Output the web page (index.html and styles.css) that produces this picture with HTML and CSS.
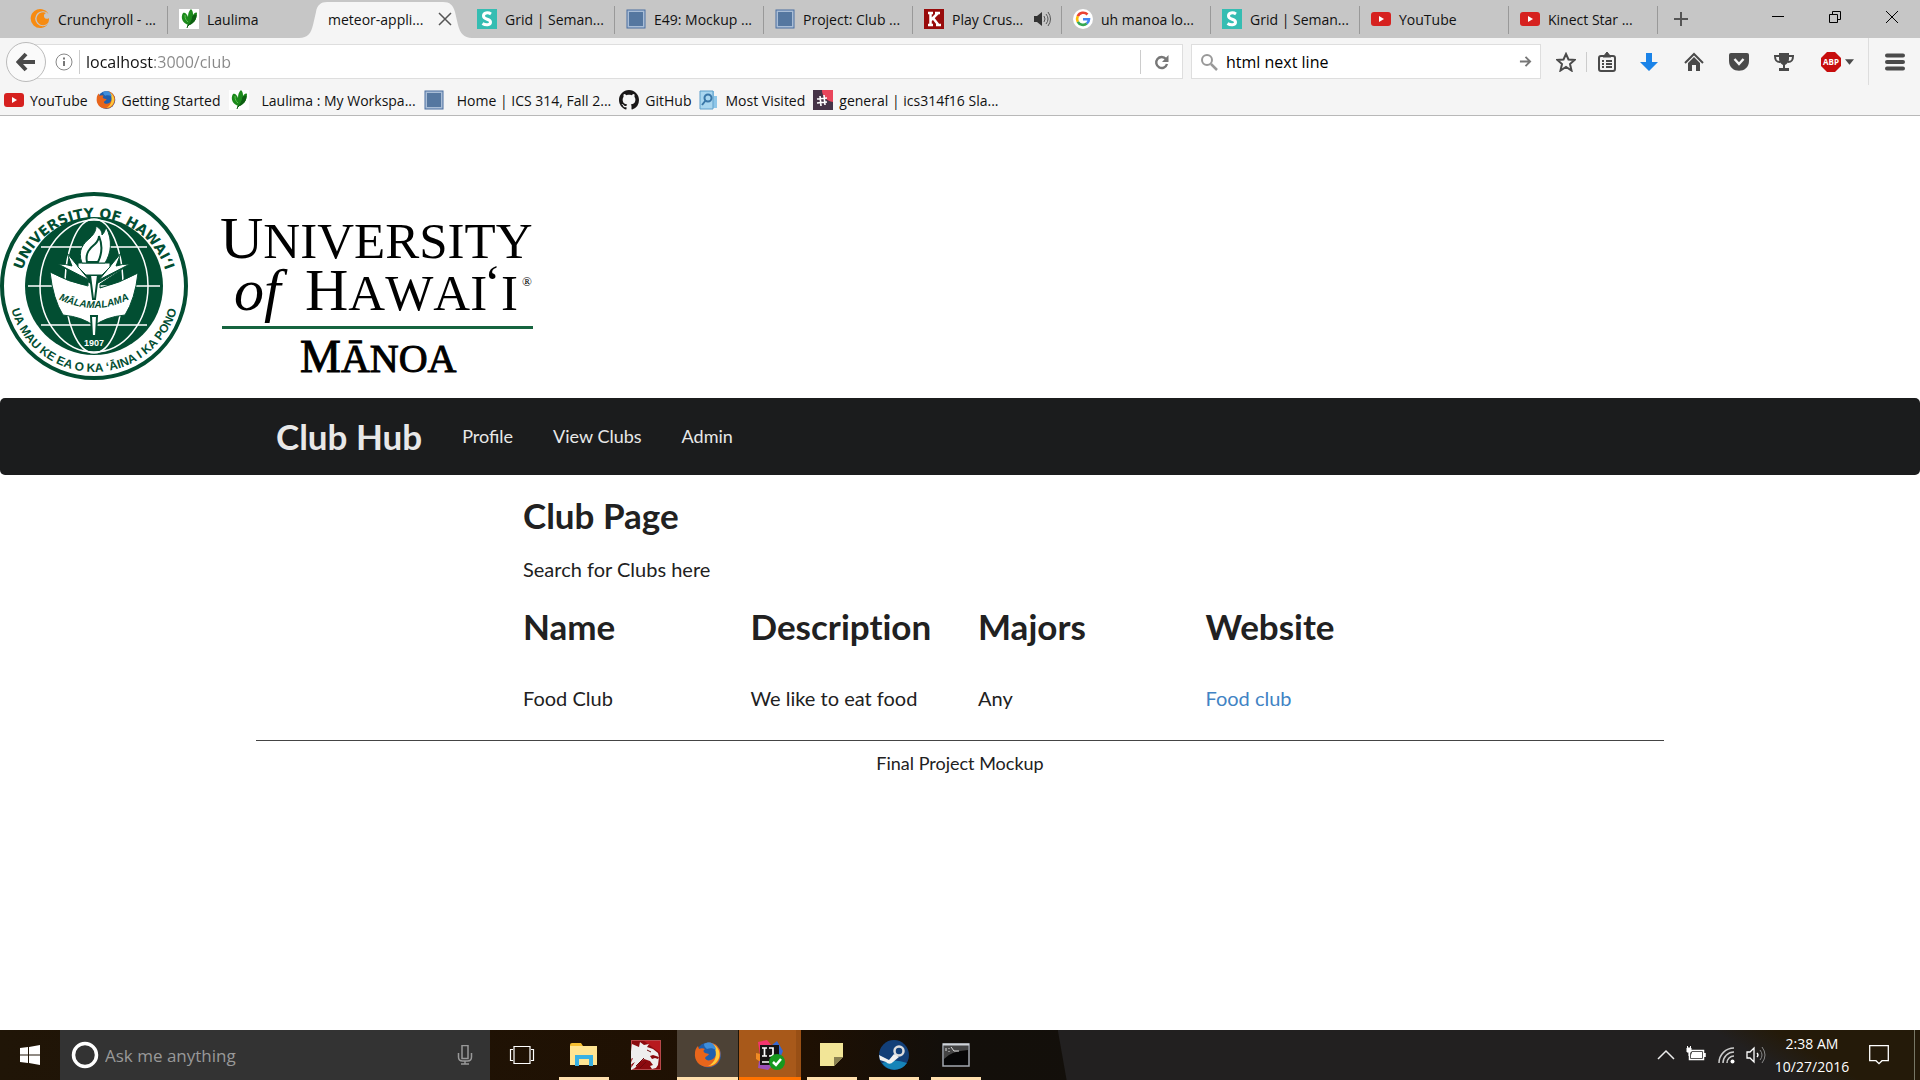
FILE: index.html
```html
<!DOCTYPE html>
<html lang="en">
<head>
<meta charset="utf-8">
<title>meteor-application-template</title>
<link rel="stylesheet" href="styles.css">
</head>
<body>
<svg class="defs" aria-hidden="true">
  <symbol id="i-yt" viewBox="0 0 20 20"><rect y="3" width="20" height="14" rx="3" fill="#d6211f"/><path d="M8 7v6l5-3z" fill="#fff"/></symbol>
  <symbol id="i-leaf" viewBox="0 0 20 20"><rect width="20" height="20" fill="#fff"/><path d="M9 16C4 14 1 9 4 4c2-1 4 1 5 4 0-4 1-6 3-8 2 2 2 4 2 6 1-2 3-3 4-2 0 6-3 11-9 12z" fill="#1c8a1c"/><path d="M9 17c2-2 4-5 5-10 2-1 3-1 3-1 0 5-3 9-8 10l-1 3" fill="#0d5f12" stroke="#0d5f12"/><path d="M6 6c0 4 1 5 3 7" fill="none" stroke="#5cc04c"/></symbol>
  <symbol id="i-s" viewBox="0 0 20 20"><rect width="20" height="20" fill="#35bdb2"/><path d="M14 5C11 3 6.500 3.500 6.500 7c0 4 7 2.500 7 6 0 3.500-5 3.500-8 1.500" fill="none" stroke="#fff" stroke-width="3"/></symbol>
  <symbol id="i-box" viewBox="0 0 20 20"><rect x="1" y="1" width="18" height="18" fill="#a9bdd6" stroke="#4a6fa0"/><rect x="3" y="3" width="14" height="14" fill="#5577a0"/></symbol>
  <symbol id="i-fox" viewBox="0 0 28 28"><circle cx="14.500" cy="14" r="12.500" fill="#1f5fae"/><path d="M11 3c4-3 12-1 15 6 2 9-3 17-12 17C5 26 0 19 1 12c0-3 1-5 3-7l1 3c2-1 4-1 6 0-2 1-2 3 0 4l4 1c-1 2-3 2-4 4 1 3 5 3 8 1 5-4 4-10 0-14-2-1-5-1-8-1z" fill="#e8651b"/><path d="M19 3c5 3 8 8 6 14-2 5-6 8-11 8 7-3 11-11 5-22z" fill="#ffca3a"/><path d="M10 3c3-2 7-2 9 0 2 2 3 4 3 6-3-2-6-2-9-1-1-1-3-2-3-5z" fill="#3f8edb"/></symbol>
  <symbol id="i-arrow" viewBox="0 0 14 14"><path d="M1 7h11M7 2l5 5-5 5" fill="none" stroke="#777" stroke-width="2"/></symbol>
</svg>

<header class="browser">
  <div class="tabstrip">
    <div class="tabs" role="tablist">
      <button class="tab" role="tab"><svg class="fav" viewBox="0 0 20 20"><path d="M18 15A9.500 9.500 0 1 1 18.500 5 7.500 7.500 0 1 0 18 15z" fill="#f78b11"/><path d="M18 14a6.500 6.500 0 1 1-2-10 3 3 0 1 0 3 5c0 2 0 3-1 5z" fill="#f78b11"/></svg><span>Crunchyroll - ...</span></button>
      <button class="tab tab-plain" role="tab"><svg class="fav"><use href="#i-leaf"/></svg><span>Laulima</span></button>
      <button class="tab tab-active" role="tab" aria-selected="true"><svg class="tab-shape" viewBox="0 0 173 38" preserveAspectRatio="none"><path d="M0 38c9 0 12-5 14-13l3-13C18 5 22 2 28 2h116c7 0 10 3 12 10l3 13c2 8 6 13 14 13z" fill="#f5f5f5"/></svg><span>meteor-appli...</span><svg class="tab-x" viewBox="0 0 14 14"><path d="M1 1l12 12M13 1L1 13" fill="none" stroke="#555" stroke-width="1.500"/></svg></button>
      <button class="tab" role="tab"><svg class="fav"><use href="#i-s"/></svg><span>Grid | Seman...</span></button>
      <button class="tab" role="tab"><svg class="fav"><use href="#i-box"/></svg><span>E49: Mockup ...</span></button>
      <button class="tab" role="tab"><svg class="fav"><use href="#i-box"/></svg><span>Project: Club ...</span></button>
      <button class="tab" role="tab"><svg class="fav" viewBox="0 0 20 20"><rect width="20" height="20" fill="#980b0b"/><path d="M4 4h5M4 16h5M11 4h5M12 16h5M6.500 4v12M14 4l-7 7M9 9l5.500 7" stroke="#fff" stroke-width="2.500" fill="none"/></svg><span>Play Crus...</span><svg class="sound" viewBox="0 0 18 16"><path d="M1 5h3l5-4v14l-5-4H1z" fill="#333"/><path d="M11 5q2 3 0 6M13 3q4 5 0 10M15 1q5 7 0 14" fill="none" stroke="#555"/></svg></button>
      <button class="tab" role="tab"><svg class="fav" viewBox="0 0 20 20"><circle cx="10" cy="10" r="10" fill="#fff"/><g fill="none" stroke-width="2.600"><path d="M14.500 5.500A6 6 0 0 0 4.800 7.200" stroke="#ea4335"/><path d="M4.800 7.200a6 6 0 0 0 0 5.600" stroke="#fbbc05"/><path d="M4.800 12.800a6 6 0 0 0 9 1.800" stroke="#34a853"/><path d="M13.800 14.600A6 6 0 0 0 16 10.200h-6" stroke="#4285f4"/></g></svg><span>uh manoa lo...</span></button>
      <button class="tab" role="tab"><svg class="fav"><use href="#i-s"/></svg><span>Grid | Seman...</span></button>
      <button class="tab" role="tab"><svg class="fav"><use href="#i-yt"/></svg><span>YouTube</span></button>
      <button class="tab" role="tab"><svg class="fav"><use href="#i-yt"/></svg><span>Kinect Star ...</span></button>
      <button class="newtab" aria-label="New tab"><svg width="16" height="16" viewBox="0 0 16 16"><path d="M8 1v14M1 8h14" stroke="#555" stroke-width="2"/></svg></button>
    </div>
    <div class="wincontrols">
      <button aria-label="Minimize"><svg viewBox="0 0 14 14"><path d="M1 6.500h12" stroke="#000"/></svg></button>
      <button aria-label="Restore"><svg viewBox="0 0 14 14"><path d="M1.500 4.500h8v8h-8zM4.500 4V1.500h8v8H10" fill="none" stroke="#000"/></svg></button>
      <button aria-label="Close"><svg viewBox="0 0 14 14"><path d="M1 1l12 12M13 1L1 13" fill="none" stroke="#000"/></svg></button>
    </div>
  </div>

  <div class="navrow">
    <button class="back" aria-label="Back"><svg width="20" height="20" viewBox="0 0 20 20"><path d="M10 2l-7.500 8 7.500 8M3 10h16" fill="none" stroke="#4a4a4a" stroke-width="4"/></svg></button>
    <div class="urlbar">
      <svg class="info" viewBox="0 0 18 18"><circle cx="9" cy="9" r="8" fill="none" stroke="#888"/><path d="M9 8v5M9 4.500v2" stroke="#777" stroke-width="2"/></svg>
      <input class="url" aria-label="Address" value="localhost:3000/club">
      <button class="reload" aria-label="Reload"><svg width="16" height="16" viewBox="0 0 16 16"><path d="M12 5a5.500 5.500 0 1 0 1 5" fill="none" stroke="#777" stroke-width="2.400"/><path d="M14.500 1v7H8z" fill="#777"/></svg></button>
    </div>
    <div class="searchbar">
      <svg width="18" height="18" viewBox="0 0 18 18"><circle cx="7" cy="7" r="5" fill="none" stroke="#999" stroke-width="2"/><path d="M11 11l6 6" stroke="#999" stroke-width="2.500"/></svg>
      <input aria-label="Search" value="html next line">
      <button aria-label="Go"><svg width="13" height="13"><use href="#i-arrow"/></svg></button>
    </div>
    <div class="tools">
      <button class="t-star" aria-label="Bookmark"><svg viewBox="0 0 20 20"><path d="M10 2l2.500 5.500 6 .5-4.500 4 1.500 6.500L10 15l-5.500 3.500L6 12 1.500 8l6-.5z" fill="none" stroke="#4a4a4a" stroke-width="2"/></svg></button>
      <button class="t-list" aria-label="Bookmarks list"><svg viewBox="0 0 20 20"><rect x="2" y="4" width="16" height="15" rx="2" fill="none" stroke="#4a4a4a" stroke-width="2"/><path d="M6 5l4-5 4 5z" fill="#4a4a4a" stroke="#4a4a4a"/><path d="M5 9h2m2 0h6M5 12h2m2 0h6M5 15h2m2 0h6" stroke="#4a4a4a" stroke-width="2"/></svg></button>
      <button aria-label="Downloads"><svg viewBox="0 0 20 20"><path d="M7 1h6v9h6l-9 9-9-9h6z" fill="#1a83e8"/></svg></button>
      <button aria-label="Home"><svg viewBox="0 0 20 20"><path d="M1 11l9-9 9 9" fill="none" stroke="#4a4a4a" stroke-width="2"/><path d="M4 11l6-6 6 6v8h-4v-6H8v6H4z" fill="#4a4a4a"/></svg></button>
      <button aria-label="Pocket"><svg viewBox="0 0 20 20"><path d="M2 1h16q2 0 2 2v6c0 13-20 13-20 0V3q0-2 2-2z" fill="#4a4a4a"/><path d="M5.500 7l4.500 5 4.500-5" fill="none" stroke="#f5f5f5" stroke-width="2.400"/></svg></button>
      <button aria-label="Achievements"><svg viewBox="0 0 20 20"><path d="M5 1h10v6c0 3-2 5-4 6v3h4v3H5v-3h4v-3c-2-1-4-3-4-6z" fill="#4a4a4a"/><path d="M5 4H1c0 4 1 6 5 6M15 4h4c0 4-1 6-5 6" fill="none" stroke="#4a4a4a" stroke-width="2"/></svg></button>
      <button class="t-abp" aria-label="Adblock Plus"><svg viewBox="0 0 20 20"><path d="M6 0h8l6 6v8l-6 6H6l-6-6V6z" fill="#c70d0d"/><text x="10" y="13" class="abp-text">ABP</text></svg><svg class="caret" viewBox="0 0 10 6"><path d="M0 0h10L5 6z" fill="#4a4a4a"/></svg></button>
      <button class="t-menu" aria-label="Menu"><svg viewBox="0 0 20 20"><path d="M2 3.500h16M2 10h16M2 16.500h16" stroke="#4a4a4a" stroke-width="4" stroke-linecap="round"/></svg></button>
    </div>
  </div>

  <nav class="bookmarks" aria-label="Bookmarks">
    <a href="#"><svg class="fav"><use href="#i-yt"/></svg>YouTube</a>
    <a href="#"><svg class="fav"><use href="#i-fox"/></svg>Getting Started</a>
    <a href="#" class="wide"><svg class="fav"><use href="#i-leaf"/></svg>Laulima : My Workspa...</a>
    <a href="#" class="wide"><svg class="fav"><use href="#i-box"/></svg>Home | ICS 314, Fall 2...</a>
    <a href="#"><svg class="fav" viewBox="0 0 16 16"><path fill="#191717" d="M8 0C3.580 0 0 3.580 0 8c0 3.540 2.290 6.530 5.470 7.590.4.070.55-.17.55-.38 0-.19-.01-.82-.01-1.490-2.010.37-2.530-.49-2.690-.94-.09-.23-.48-.94-.82-1.130-.28-.15-.68-.52-.01-.53.63-.01 1.080.58 1.230.82.72 1.210 1.870.87 2.330.66.07-.52.28-.87.51-1.070-1.780-.2-3.640-.89-3.640-3.950 0-.87.31-1.590.82-2.150-.08-.2-.36-1.020.08-2.120 0 0 .67-.21 2.200.82.64-.18 1.320-.27 2-.27s1.360.09 2 .27c1.530-1.040 2.200-.82 2.200-.82.44 1.100.16 1.920.08 2.120.51.56.82 1.270.82 2.150 0 3.070-1.870 3.750-3.650 3.950.29.25.54.73.54 1.480 0 1.070-.01 1.930-.01 2.200 0 .21.15.46.55.38A8.010 8.010 0 0 0 16 8c0-4.420-3.580-8-8-8z"/></svg>GitHub</a>
    <a href="#"><svg class="fav" viewBox="0 0 20 20"><path d="M1 1h14v5h3v12H1z" fill="#8fc6e8"/><path d="M1 1h13v18H1z" fill="#a9d6ef" stroke="#5e9fca"/><circle cx="9" cy="8" r="3.500" fill="none" stroke="#3a77a8" stroke-width="2"/><path d="M7 10l-4 5" stroke="#3a77a8" stroke-width="2"/></svg>Most Visited</a>
    <a href="#"><svg class="fav" viewBox="0 0 20 20"><rect width="20" height="20" fill="#453347"/><path d="M9 0h11v12C13 11 9 6 9 0z" fill="#e9455b"/><path d="M7 6l1 10M11 5l1 10M4 9l10-1M4 13l10-1" stroke="#fff" stroke-width="1.600"/></svg>general | ics314f16 Sla...</a>
  </nav>
</header>

<main class="page">
  <svg class="logo" width="540" height="200" viewBox="0 0 540 200" role="img" aria-label="University of Hawaii at Manoa">
    <defs>
      <path id="arc-top" d="M19 101a75 75 0 0 1 150 0"/>
      <path id="arc-bottom" d="M8 94a86 86 0 0 0 172 0"/>
      <path id="arc-book" d="M58 107q36 18 72 0"/>
    </defs>
    <circle cx="94" cy="94" r="92" fill="#fff" stroke="#024e32" stroke-width="4"/>
    <circle cx="94" cy="94" r="69" fill="#024e32"/>
    <g fill="none" stroke="#fff" stroke-width="1.500">
      <path d="M28 94h132M41 55h106M41 133h106"/>
      <ellipse cx="94" cy="94" rx="54" ry="66"/>
      <ellipse cx="94" cy="94" rx="29" ry="67"/>
    </g>
    <path d="M50 80q18 10 38 14v-4L58 72l32 19h8l32-19-30 20v4q20-5 38-15-3 26-13 42-20 2-31 11-11-9-31-11-10-16-13-43z" fill="#fff" stroke="#024e32" stroke-width="1"/>
    <path d="M67 61l22 27-31-16q8 0 14 2zM121 61L99 88l31-16q-8 0-14 2z" fill="#fff" stroke="#024e32" stroke-width="1"/>
    <path d="M90 83h8l-3 24h-2zM91 124h6l-1 20h-4z" fill="#fff" stroke="#024e32" stroke-width="2"/>
    <path d="M78 71h32v4l-8 8H86l-8-8z" fill="#fff" stroke="#024e32"/>
    <path d="M82 71c-5-13 2-20 8-25 4-4 6-7 6-12 5 3 6 6 6 9 2-2 3-4 4-8 7 14 5 26-1 36z" fill="#fff" stroke="#024e32"/>
    <path d="M87 70c-2-9 3-14 8-18 3-3 4-6 4-8 4 10 3 18-1 26z" fill="none" stroke="#024e32" stroke-width="2"/>
    <text class="seal-top"><textPath href="#arc-top" startOffset="50%">UNIVERSITY OF HAWAIʻI</textPath></text>
    <text class="seal-bottom"><textPath href="#arc-bottom" startOffset="50%">UA MAU KE EA O KA ʻĀINA I KA PONO</textPath></text>
    <text class="seal-book"><textPath href="#arc-book" startOffset="50%">MĀLAMALAMA</textPath></text>
    <text class="seal-year" x="94" y="154">1907</text>
    <g class="wordmark">
      <text x="220" y="66"><tspan class="cap">U</tspan>NIVERSITY</text>
      <text x="234" y="118" class="of">of</text>
      <text x="305" y="118"><tspan class="cap">H</tspan>AWAI</text>
      <text x="484" y="108">ʻ</text>
      <text x="501" y="118">I</text>
      <text x="522" y="94" class="reg">®</text>
      <text x="300" y="180" class="manoa"><tspan class="manoa-cap">M</tspan>ĀNOA</text>
    </g>
    <path d="M222 135.500h311" stroke="#16643f" stroke-width="3"/>
  </svg>

  <nav class="menu" aria-label="Main">
    <div class="container menu-items">
      <a href="#" class="brand">Club Hub</a>
      <a href="#">Profile</a>
      <a href="#">View Clubs</a>
      <a href="#">Admin</a>
    </div>
  </nav>

  <div class="container">
    <section class="clubs">
      <h1>Club Page</h1>
      <p>Search for Clubs here</p>
      <table>
        <thead><tr><th>Name</th><th>Description</th><th>Majors</th><th>Website</th></tr></thead>
        <tbody><tr><td>Food Club</td><td>We like to eat food</td><td>Any</td><td><a href="#">Food club</a></td></tr></tbody>
      </table>
    </section>
    <footer>Final Project Mockup</footer>
  </div>
</main>

<div class="taskbar">
  <button class="start" aria-label="Start"><svg width="20" height="20" viewBox="0 0 20 20"><path d="M0 3l8-1v7.500H0zM9 2l11-2v9.500H9zM0 10.500h8V18l-8-1zM9 10.500h11V20L9 18z" fill="#fff"/></svg></button>
  <div class="cortana">
    <svg width="28" height="28" viewBox="0 0 28 28"><circle cx="14" cy="14" r="11.500" fill="none" stroke="#fff" stroke-width="3.500"/></svg>
    <input aria-label="Search Windows" placeholder="Ask me anything">
    <button aria-label="Speak"><svg width="16" height="20" viewBox="0 0 16 20"><path d="M5 .500h6v13H5zM1.500 8v4q0 4 4 4h5q4 0 4-4V8M8 16v3M4 19h8" fill="none" stroke="#999" stroke-width="1.500"/></svg></button>
  </div>
  <div class="apps">
    <button aria-label="Task view"><svg viewBox="0 0 30 30"><path d="M7 6.500h16v17H7zM6 9.500H3.500v11H6M24 9.500h2.500v11H24" fill="none" stroke="#fff" stroke-width="1.200"/></svg></button>
    <button class="open" aria-label="File Explorer"><svg viewBox="0 0 30 30"><path d="M1 5q0-2 2-2h9l2 3H1z" fill="#f5bf31"/><path d="M1 6h27v19H1z" fill="#ffe592"/><path d="M6 26V15h18v11h-4v-7h-10v7z" fill="#38b1e4"/></svg></button>
    <button aria-label="Dragon"><svg viewBox="0 0 30 30"><rect x=".5" y=".5" width="29" height="29" fill="#8b0a0e" stroke="#b5484a"/><path d="M13 1h16v12z" fill="#b81a1e"/><path d="M1 4l7 3 1-5 4 3 5-1-2 3 6 2 5 4 1 4-6-2-3 1 2 3 3-1 3 1 1-2-1 8-2 3-4 1-2-3 3-1-3-4-6-2-4 3-5 6-6 3 6-9-5 3 3-7-3 1z" fill="#eee"/><path d="M16 10l4 2M5 26l8-8M9 28l6-6" stroke="#6b090c"/></svg></button>
    <button class="open current" aria-label="Firefox"><svg viewBox="-1 -1 30 30"><use href="#i-fox" width="28" height="28"/></svg></button>
    <button class="open alert" aria-label="IntelliJ IDEA"><svg viewBox="0 0 30 30"><path d="M3 2L12 0l5 6-12 9z" fill="#f4346e"/><path d="M17 5l5-4 6 10-5 12z" fill="#3669d3"/><path d="M1 13l9 2-3 8-6-4z" fill="#f28a24"/><path d="M4 21h18l-9 9-10-2z" fill="#9b50b8"/><rect x="5" y="5" width="19" height="20" fill="#161313"/><path d="M7 8h5M7 16h5M9.500 8v8M14 8h4v6q0 2-3 2h-1M7 22h7" fill="none" stroke="#fff" stroke-width="1.700"/><circle cx="22" cy="22" r="8" fill="#16991e"/><path d="M18 22l3 3 5-6" fill="none" stroke="#fff" stroke-width="2.500"/></svg></button>
    <button class="open" aria-label="Sticky Notes"><svg viewBox="0 0 30 30"><path d="M3 3h23v14l-9 9H3z" fill="#f2e597"/><path d="M17 17h9l-9 9z" fill="#8a8052"/></svg></button>
    <button class="open" aria-label="Steam"><svg viewBox="0 0 30 30"><circle cx="15" cy="15" r="15" fill="#123f78"/><path d="M3 23q12-5 25 0A15 15 0 0 1 3 23z" fill="#1684b8"/><circle cx="20" cy="11" r="4.500" fill="none" stroke="#dcdcdc" stroke-width="2.500"/><path d="M0 15l10 5 5-6 5 3-6 5a4.500 4.500 0 0 1-7 0L1 20z" fill="#f1f1f1"/></svg></button>
    <button class="open" aria-label="Command Prompt"><svg viewBox="0 0 30 30"><path d="M2 4h26v22H2z" fill="#060606" stroke="#a2a8b0" stroke-width="1.500"/><path d="M3 5h24v5Q10 11 3 19z" fill="#444"/><path d="M2 4.500h26" stroke="#cfd3d8" stroke-width="2"/><path d="M5 8v3M8 8v1m0 2v1M10 7l3 4h5" stroke="#ddd" fill="none"/></svg></button>
  </div>
  <div class="tray">
    <button aria-label="Hidden icons"><svg viewBox="0 0 20 20"><path d="M2 14l8-8 8 8" fill="none" stroke="#eee" stroke-width="1.500"/></svg></button>
    <button aria-label="Battery"><svg viewBox="0 0 20 20"><path d="M3.500 5.500h14v9h-14zM19 8v4" fill="none" stroke="#fff" stroke-width="1.500"/><path d="M6 7h10v6H5v-3z" fill="#fff"/><path d="M1 3h4v4H1zM1.500 1v2M4.500 1v2M3 7v4" stroke="#fff" fill="#fff"/></svg></button>
    <button aria-label="Network"><svg viewBox="0 0 20 20"><g fill="none" stroke="#ccc" stroke-width="1.500"><path d="M3 18A15 15 0 0 1 18 3M7 18A11 11 0 0 1 18 7M11 18a7 7 0 0 1 7-7"/></g><circle cx="16.500" cy="16.500" r="2" fill="#fff"/></svg></button>
    <button aria-label="Volume"><svg viewBox="0 0 20 20"><path d="M1 7h3l4-4v14l-4-4H1zM11 8q2 2 0 4" fill="none" stroke="#fff" stroke-width="1.300"/><path d="M14 5q4 5 0 10M16 2q6 8 0 16" fill="none" stroke="#888"/></svg></button>
    <div class="clock"><span>2:38 AM</span><span>10/27/2016</span></div>
    <button class="notes" aria-label="Notifications"><svg viewBox="0 0 20 20"><path d="M.7.7h18.600v15H13l-3 3-3-3H.7z" fill="none" stroke="#fff" stroke-width="1.300"/></svg></button>
  </div>
</div>
</body>
</html>
```
FILE: styles.css
```css
* { box-sizing: border-box; }

body {
  margin: 0;
  min-height: 100vh;
  display: flex;
  flex-direction: column;
  background: #fff;
  font-family: "Open Sans", "Noto Sans", sans-serif;
}

button {
  display: flex;
  align-items: center;
  justify-content: center;
  margin: 0;
  padding: 0;
  border: 0;
  background: none;
  font: inherit;
  color: inherit;
}

input {
  flex: 1;
  min-width: 0;
  padding: 0;
  border: 0;
  background: none;
  font: inherit;
  outline: none;
}

svg { display: block; flex: none; }
a { text-decoration: none; }
.defs { position: absolute; width: 0; height: 0; }
.fav { width: 20px; height: 20px; }

/* Browser window */
.browser {
  background: #f5f5f5;
  border-bottom: 1px solid #b8b8b8;
  font-size: 14px;
  color: #111;
}

.tabstrip {
  display: flex;
  justify-content: space-between;
  height: 38px;
  background: #c6c6c6;
}

.tabs { display: flex; padding-left: 19px; }

.tab {
  position: relative;
  width: 149px;
  padding: 0 11px;
  gap: 8px;
  justify-content: flex-start;
  white-space: nowrap;
}

.tab:not(.tab-plain):not(.tab-active)::after {
  content: "";
  position: absolute;
  right: 0;
  top: 6px;
  bottom: 4px;
  width: 1px;
  background: #999;
}

.tab-active { justify-content: space-between; padding-right: 14px; z-index: 1; }
.tab-active span { position: relative; }
.tab-shape { position: absolute; left: -18px; top: 0; width: 173px; height: 38px; }
.tab-x { position: relative; width: 14px; height: 14px; }
.sound { width: 18px; height: 16px; margin-left: auto; }
.newtab { width: 46px; }

.wincontrols { display: flex; align-items: flex-start; }
.wincontrols button { width: 57px; height: 34px; }
.wincontrols svg { width: 14px; height: 14px; }

.navrow { display: flex; align-items: center; height: 47px; padding: 0 0 0 6px; }

.back {
  position: relative;
  z-index: 1;
  width: 40px;
  height: 40px;
  border: 1px solid #bbb;
  border-radius: 50%;
  background: #fafafa;
}

.urlbar, .searchbar {
  display: flex;
  align-items: center;
  height: 35px;
  border: 1px solid #dedede;
  background: #fff;
  font-size: 16px;
}

.urlbar { flex: 1; margin-left: -12px; padding-left: 20px; }
.info { width: 18px; height: 18px; }

.url {
  height: 24px;
  margin-left: 6px;
  padding-left: 6px;
  border-left: 1px solid #ccc;
  background: linear-gradient(to right, #111 74px, #888 74px);
  -webkit-background-clip: text;
  background-clip: text;
  -webkit-text-fill-color: transparent;
}

.reload { width: 42px; height: 24px; border-left: 1px solid #ccc; }
.searchbar { width: 350px; margin-left: 8px; padding: 0 8px; gap: 8px; }

.tools { display: flex; align-items: center; padding-left: 5px; }
.tools button { width: 45px; height: 36px; }
.tools svg { width: 20px; height: 20px; }
.tools .t-star { width: 40px; }
.tools .t-list { width: 40px; border-left: 1px solid #ccc; height: 20px; }
.tools .t-abp { width: 62px; gap: 4px; }
.tools .caret { width: 9px; height: 6px; }
.tools .t-menu { width: 52px; height: 47px; border-left: 1px solid #ddd; }
.abp-text { font: bold 8px "Open Sans", sans-serif; fill: #fff; text-anchor: middle; }

.bookmarks { display: flex; height: 30px; padding-left: 4px; gap: 8px; }
.bookmarks a { display: flex; align-items: center; gap: 6px; color: #111; white-space: nowrap; }
.bookmarks .wide { gap: 13px; }

/* Club Hub page */
.page {
  flex: 1;
  padding-top: 76px;
  font-family: Lato, sans-serif;
  color: #212121;
}

.logo { margin-bottom: 6px; }
.seal-top { font: bold 14px "DejaVu Sans", sans-serif; fill: #024e32; text-anchor: middle; }
.seal-bottom { font: bold 12px "Liberation Sans", sans-serif; fill: #024e32; text-anchor: middle; }
.seal-book { font: italic bold 10px "Liberation Sans", sans-serif; fill: #024e32; text-anchor: middle; }
.seal-year { font: bold 9px "Liberation Sans", sans-serif; fill: #fff; text-anchor: middle; }
.wordmark { font: 51px "Liberation Serif", serif; font-kerning: none; fill: #000; }
.cap { font-size: 60px; }
.of { font-size: 60px; font-style: italic; }
.reg { font-size: 13px; }
.manoa { font-size: 40px; stroke: #000; stroke-width: 1px; }
.manoa-cap { font-size: 46px; }

.container { width: 1408px; max-width: 100%; margin: 0 auto; }
.menu { background: #1b1c1d; border-radius: 5px; }
.menu-items { display: flex; align-items: center; gap: 40px; height: 77px; padding: 0 0 2px 20px; font-size: 18px; }
.menu a { color: #e8e8e8; }
.menu .brand { font-size: 35px; font-weight: bold; }

.clubs { padding: 18px 0 28px 267px; border-bottom: 1px solid #444; font-size: 20px; }
.clubs h1 { margin: 0; font-size: 35px; line-height: 44px; }
.clubs p { margin: 18px 0; line-height: 28px; }
table { width: 910px; table-layout: fixed; border-collapse: collapse; }
th, td { padding: 0; text-align: left; }
th { font-size: 35px; line-height: 50px; font-variant-ligatures: none; }
td { padding-top: 33px; line-height: 28px; }
td a { color: #4183c4; }
footer { padding-top: 9px; font-size: 18px; line-height: 26px; text-align: center; }

/* Taskbar */
.taskbar {
  display: flex;
  height: 50px;
  color: #fff;
  background:
    linear-gradient(30deg, transparent 50%, #241a09 65%) right / 330px 100% no-repeat,
    linear-gradient(80deg, transparent 8px, #222020 9px) 1058px 0 / 900px 100% no-repeat,
    linear-gradient(to right, #201507, #1f1002 800px, #130f0a 940px, #13100c);
}

.start { width: 60px; }
.cortana { display: flex; align-items: center; width: 430px; padding: 0 17px 0 11px; gap: 6px; background: #333; font-size: 17px; }
.cortana input::placeholder { color: #999; opacity: 1; }

.apps { display: flex; flex: 1; padding-left: 1px; }
.apps button { position: relative; width: 62px; }
.apps svg { width: 30px; height: 30px; }
.open::after { content: ""; position: absolute; left: 6px; right: 6px; bottom: 0; height: 3px; background: #ffdfad; }
.apps .current { background: #4d4236; border-right: 1px solid #1f1508; }
.apps .alert { background: linear-gradient(to right, #a8591a 57px, #984f15 57px); }
.current::after { left: 0; right: 0; }
.alert::after { left: 0; right: 0; background: #ff7200; }

.tray { display: flex; align-items: center; padding-right: 9px; border-right: 1px solid #776; margin-right: 5px; }
.tray button { width: 30px; height: 50px; }
.tray svg { width: 20px; height: 20px; }
.clock { display: flex; flex-direction: column; align-items: center; width: 82px; font-size: 14px; line-height: 23px; }
.tray .notes { width: 52px; }
```
